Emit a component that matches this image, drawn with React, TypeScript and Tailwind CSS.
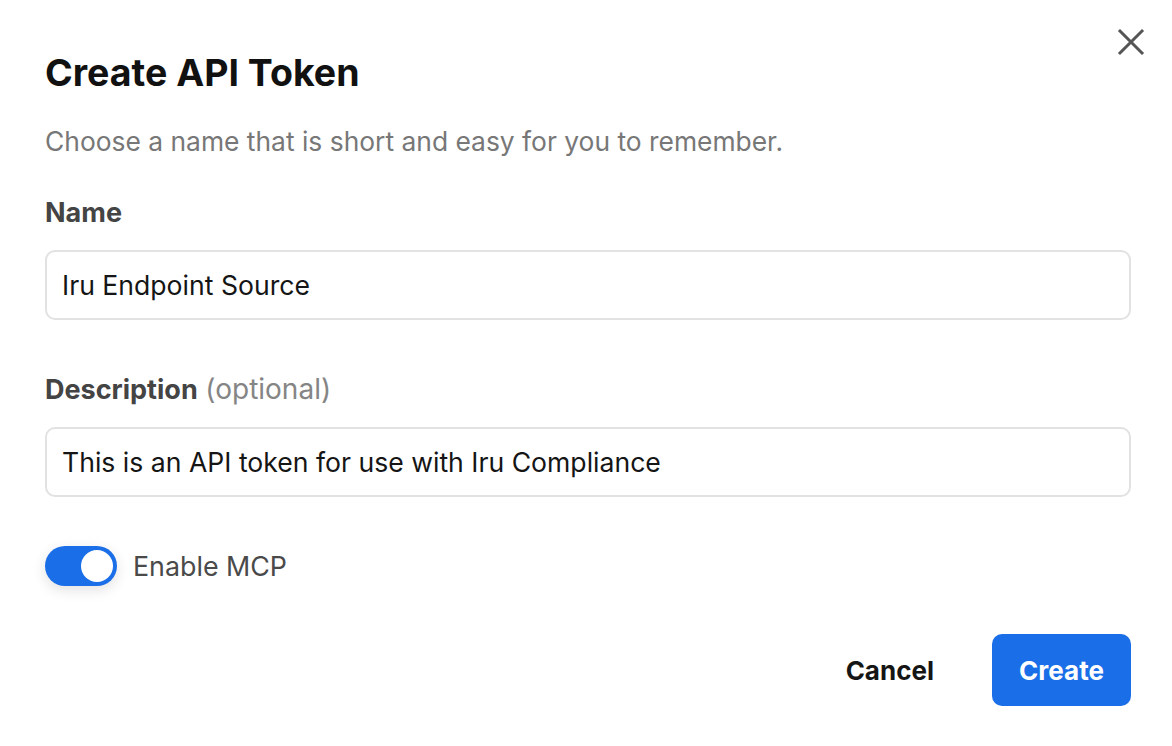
import { useState } from "react";

function CloseIcon() {
  return (
    <svg width="28" height="28" viewBox="0 0 28 28" fill="none" stroke="#555555" strokeWidth="3" strokeLinecap="square">
      <path d="M3 3L25 25M25 3L3 25" />
    </svg>
  );
}

function Toggle({ on, onChange }: { on: boolean; onChange: (v: boolean) => void }) {
  return (
    <button
      type="button"
      onClick={() => onChange(!on)}
      className={`relative h-[40px] w-[72px] rounded-full shadow-[0_4px_14px_rgba(0,0,0,0.12)] ${on ? "bg-[#1a6fe8]" : "bg-[#d4d4d4]"}`}
    >
      <span
        className={`absolute top-[4px] h-[32px] w-[32px] rounded-full bg-white ${on ? "left-[36px]" : "left-[4px]"}`}
      />
    </button>
  );
}

export default function App() {
  const [mcp, setMcp] = useState(true);
  const [name, setName] = useState("Iru Endpoint Source");
  const [desc, setDesc] = useState("This is an API token for use with Iru Compliance");

  return (
    <div className="relative min-h-screen w-[1172px] bg-white font-['Inter',sans-serif]">
      <button className="absolute right-[27px] top-[28px]" aria-label="Close">
        <CloseIcon />
      </button>

      <div className="px-[45px] pr-[41px] pt-[51px]">
        <h1 className="text-[37.5px] font-bold leading-[44px] text-[#111111]">Create API Token</h1>
        <p className="mt-[28px] text-[26.4px] leading-[36px] text-[#777777]">
          Choose a name that is short and easy for you to remember.
        </p>

        <label className="mt-[38px] block text-[27px] font-bold leading-[32px] text-[#444444]">Name</label>
        <input
          value={name}
          onChange={(e) => setName(e.target.value)}
          className="mt-[21px] block h-[70px] w-full rounded-[10px] border-2 border-[#e2e2e2] px-[15px] text-[26.6px] text-[#151515] outline-none"
        />

        <label className="mt-[53px] block text-[27px] leading-[32px] text-[#444444]">
          <span className="font-bold">Description</span>{" "}
          <span className="text-[28px] text-[#858585]">(optional)</span>
        </label>
        <input
          value={desc}
          onChange={(e) => setDesc(e.target.value)}
          className="mt-[21px] block h-[70px] w-full rounded-[10px] border-2 border-[#e2e2e2] px-[15px] text-[26.6px] text-[#151515] outline-none"
        />

        <div className="mt-[49px] flex items-center gap-[16px]">
          <Toggle on={mcp} onChange={setMcp} />
          <span className="text-[26.8px] leading-[36px] text-[#4a4a4a]">Enable MCP</span>
        </div>

        <div className="mt-[48px] flex items-center justify-end gap-[30px]">
          <button className="h-[72px] px-[28px] text-[26px] font-bold text-[#151515]">Cancel</button>
          <button className="h-[72px] w-[139px] rounded-[10px] bg-[#1a6fe8] text-[26px] font-bold text-white">
            Create
          </button>
        </div>
      </div>
    </div>
  );
}
